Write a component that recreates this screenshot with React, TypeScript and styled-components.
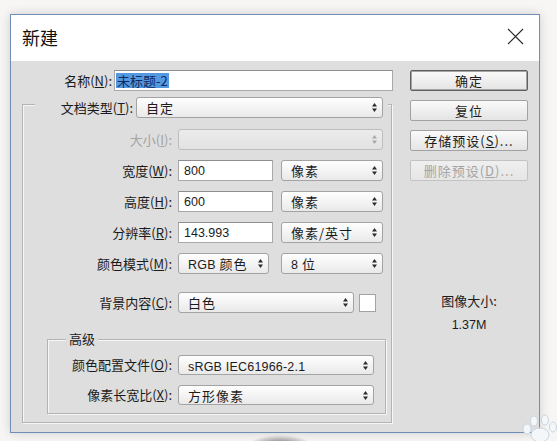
import React from "react";
import styled, { createGlobalStyle } from "styled-components";

const GlobalStyle = createGlobalStyle`
  html, body {
    margin: 0;
    padding: 0;
  }
  body {
    width: 557px;
    height: 441px;
    overflow: hidden;
    background:
      radial-gradient(ellipse 34px 12px at 280px 447px, rgba(35, 35, 35, 0.8), rgba(35, 35, 35, 0) 100%),
      #f8f6f5;
    font-family: "Noto Sans CJK SC", "Noto Sans", sans-serif;
    color: #1b1b1b;
  }
`;

const Page = styled.div`
  position: relative;
  box-sizing: border-box;
  height: 441px;
  padding: 14px 0 0 10px;
`;

const Window = styled.div`
  box-sizing: border-box;
  width: 530px;
  height: 419px;
  border: 1px solid #6d8fb5;
  display: flex;
  flex-direction: column;
  background: #dedede;
  box-shadow: 0 0 10px rgba(0, 0, 0, 0.16);
`;

const TitleBar = styled.div`
  flex-shrink: 0;
  height: 46px;
  background: #fff;
  display: flex;
  align-items: center;
  justify-content: space-between;
  padding: 0 15px 3px 11px;
  box-sizing: border-box;
`;

const Title = styled.span`
  font-size: 18px;
  line-height: 1;
  color: #111;
`;

const Body = styled.div`
  flex: 1;
  display: flex;
  gap: 18px;
  padding: 9px 11px 0 11px;
`;

const LeftCol = styled.div`
  width: 370px;
  display: flex;
  flex-direction: column;
`;

const RightCol = styled.div`
  width: 118px;
  display: flex;
  flex-direction: column;
  gap: 9px;
`;

const Row = styled.div<{ $gap?: number; $mt?: number; $h?: number }>`
  display: flex;
  align-items: center;
  height: ${(p) => p.$h ?? 21}px;
  gap: ${(p) => p.$gap ?? 6}px;
  margin-top: ${(p) => p.$mt ?? 0}px;
`;

const Label = styled.span<{ $w: number; $disabled?: boolean }>`
  width: ${(p) => p.$w}px;
  flex-shrink: 0;
  text-align: right;
  font-size: 13px;
  line-height: 16px;
  white-space: nowrap;
  color: ${(p) => (p.$disabled ? "#a3a3a3" : "#1b1b1b")};
`;

const Key = styled.u`
  text-underline-offset: 1px;
`;

const Group = styled.fieldset<{ $ml?: number; $mr?: number; $mt?: number }>`
  margin: ${(p) => p.$mt ?? 0}px ${(p) => p.$mr ?? 0}px 0 ${(p) => p.$ml ?? 0}px;
  padding: 0 0 8px 0;
  min-width: 0;
  border: 1px solid #b3b3b3;
  box-shadow: 1px 1px 0 #f6f6f6, inset 1px 1px 0 #f6f6f6;
  display: flex;
  flex-direction: column;
  gap: 10px;
`;

const Legend = styled.legend<{ $ml: number }>`
  margin-left: ${(p) => p.$ml}px;
  background: #dedede;
`;

const TypeLegend = styled(Legend)`
  padding: 6px 5px 0 0;
`;

const TextLegend = styled(Legend)`
  padding: 0 3px;
  font-size: 13px;
  line-height: 16px;
`;

const GroupBody = styled.div<{ $pt: number }>`
  padding-top: ${(p) => p.$pt}px;
  display: flex;
  flex-direction: column;
  gap: 10px;
`;

const SelectBox = styled.div<{ $w: number; $ml?: number; $disabled?: boolean; $h?: number }>`
  box-sizing: border-box;
  width: ${(p) => p.$w}px;
  height: ${(p) => p.$h ?? 21}px;
  margin-left: ${(p) => p.$ml ?? 0}px;
  flex-shrink: 0;
  display: flex;
  align-items: center;
  justify-content: space-between;
  padding: 0 5px 0 9px;
  border: 1px solid ${(p) => (p.$disabled ? "#bdbdbd" : "#a3a3a3")};
  border-radius: 3px;
  background: ${(p) =>
    p.$disabled
      ? "linear-gradient(#ececec, #e2e2e2)"
      : "linear-gradient(#fefefe, #f4f4f4 50%, #e9e9e9)"};
  font-size: 13px;
  letter-spacing: 1px;
  color: #1b1b1b;
  white-space: nowrap;
`;

const Latin = styled.span`
  font-family: "Liberation Sans", Arial, sans-serif;
  font-size: 12.5px;
  letter-spacing: 0.2px;
`;

const Field = styled.div<{ $w: number }>`
  box-sizing: border-box;
  width: ${(p) => p.$w}px;
  height: 21px;
  flex-shrink: 0;
  display: flex;
  align-items: center;
  padding-left: 5px;
  background: #fff;
  border: 1px solid #a9a9a9;
  border-top-color: #8e8e8e;
  font-family: "Liberation Sans", Arial, sans-serif;
  font-size: 12.5px;
  color: #1b1b1b;
`;

const NameField = styled(Field)`
  padding-left: 1px;
  font-family: "Noto Sans CJK SC", sans-serif;
  font-size: 13px;
`;

const Selection = styled.span`
  background: #5598e2;
  color: #0f2a5e;
  line-height: 15px;
  padding: 0 1px;
`;

const Swatch = styled.div`
  box-sizing: border-box;
  width: 17px;
  height: 18px;
  margin-left: -1px;
  background: #fff;
  border: 1px solid #a3a3a3;
`;

const Button = styled.div<{ $default?: boolean; $disabled?: boolean }>`
  box-sizing: border-box;
  height: 21px;
  display: flex;
  align-items: center;
  justify-content: center;
  border: 1px solid ${(p) => (p.$default ? "#5f5f5f" : p.$disabled ? "#c3c3c3" : "#a2a2a2")};
  box-shadow: ${(p) => (p.$default ? "inset 0 0 0 1px #a5a5a5" : "none")};
  border-radius: 2px;
  background: ${(p) =>
    p.$disabled ? "linear-gradient(#efefef, #e6e6e6)" : "linear-gradient(#fafafa, #eeeeee 55%, #e4e4e4)"};
  font-size: 13px;
  letter-spacing: 1px;
  color: ${(p) => (p.$disabled ? "#a4a4a4" : "#1b1b1b")};
`;

const SizeInfo = styled.div`
  margin-top: 103px;
  display: flex;
  flex-direction: column;
  align-items: center;
  gap: 8px;
  font-size: 13px;
  line-height: 16px;
`;

const SizeValue = styled.span`
  font-family: "Liberation Sans", Arial, sans-serif;
  font-size: 12.5px;
`;

const Watermark = styled.svg`
  position: absolute;
  right: 0;
  bottom: 0;
`;

const Arrows = ({ disabled }: { disabled?: boolean }) => (
  <svg width="5" height="9" viewBox="0 0 5 9">
    <g fill={disabled ? "#a9a9a9" : "#2b2b2b"}>
      <polygon points="2.5,0 5,3.5 0,3.5" />
      <polygon points="0,5.5 5,5.5 2.5,9" />
    </g>
  </svg>
);

type SelectProps = {
  w: number;
  ml?: number;
  h?: number;
  disabled?: boolean;
  children?: React.ReactNode;
};

const Select = ({ w, ml, h, disabled, children }: SelectProps) => (
  <SelectBox $w={w} $ml={ml} $h={h} $disabled={disabled}>
    <span>{children}</span>
    <Arrows disabled={disabled} />
  </SelectBox>
);

const CloseIcon = () => (
  <svg width="17" height="17" viewBox="0 0 17 17">
    <path d="M1 1 L16 16 M16 1 L1 16" stroke="#2a2a2a" strokeWidth="1.1" fill="none" />
  </svg>
);

const App = () => {
  const W = 149;
  return (
    <Page>
      <GlobalStyle />
      <Window>
        <TitleBar>
          <Title>新建</Title>
          <CloseIcon />
        </TitleBar>
        <Body>
          <LeftCol>
            <Row $gap={2}>
              <Label $w={90}>
                名称(<Key>N</Key>):
              </Label>
              <NameField $w={279}>
                <Selection>未标题-2</Selection>
              </NameField>
            </Row>

            <Group>
              <TypeLegend $ml={12}>
                <Row $gap={3}>
                  <Label $w={98}>
                    文档类型(<Key>T</Key>):
                  </Label>
                  <Select w={247}>自定</Select>
                </Row>
              </TypeLegend>

              <GroupBody $pt={11}>
                <Row>
                  <Label $w={W} $disabled>
                    大小(<Key>I</Key>):
                  </Label>
                  <Select w={205} disabled />
                </Row>
                <Row>
                  <Label $w={W}>
                    宽度(<Key>W</Key>):
                  </Label>
                  <Field $w={95}>800</Field>
                  <Select w={102} ml={2}>
                    像素
                  </Select>
                </Row>
                <Row>
                  <Label $w={W}>
                    高度(<Key>H</Key>):
                  </Label>
                  <Field $w={95}>600</Field>
                  <Select w={102} ml={2}>
                    像素
                  </Select>
                </Row>
                <Row>
                  <Label $w={W}>
                    分辨率(<Key>R</Key>):
                  </Label>
                  <Field $w={95}>143.993</Field>
                  <Select w={102} ml={2}>
                    像素/英寸
                  </Select>
                </Row>
                <Row>
                  <Label $w={W}>
                    颜色模式(<Key>M</Key>):
                  </Label>
                  <Select w={91}>
                    <Latin>RGB</Latin> 颜色
                  </Select>
                  <Select w={102} ml={6}>
                    <Latin>8</Latin> 位
                  </Select>
                </Row>
                <Row $mt={8}>
                  <Label $w={W}>
                    背景内容(<Key>C</Key>):
                  </Label>
                  <Select w={176}>白色</Select>
                  <Swatch />
                </Row>

                <Group $ml={24} $mr={5} $mt={8}>
                  <TextLegend $ml={18}>高级</TextLegend>
                  <GroupBody $pt={8}>
                    <Row $h={20}>
                      <Label $w={124}>
                        颜色配置文件(<Key>O</Key>):
                      </Label>
                      <Select w={196} h={20}>
                        <Latin>sRGB IEC61966-2.1</Latin>
                      </Select>
                    </Row>
                    <Row $h={20}>
                      <Label $w={124}>
                        像素长宽比(<Key>X</Key>):
                      </Label>
                      <Select w={196} h={20}>
                        方形像素
                      </Select>
                    </Row>
                  </GroupBody>
                </Group>
              </GroupBody>
            </Group>
          </LeftCol>

          <RightCol>
            <Button $default>确定</Button>
            <Button>复位</Button>
            <Button>
              存储预设(<Key>S</Key>)...
            </Button>
            <Button $disabled>
              删除预设(<Key>D</Key>)...
            </Button>
            <SizeInfo>
              <span>图像大小:</span>
              <SizeValue>1.37M</SizeValue>
            </SizeInfo>
          </RightCol>
        </Body>
      </Window>

      <Watermark width="40" height="28" viewBox="0 0 40 28">
        <g fill="#f4f7fa" stroke="#c9d5e2" strokeWidth="1">
          <ellipse cx="23" cy="22" rx="9" ry="7" />
          <ellipse cx="10" cy="16" rx="4" ry="5" />
          <ellipse cx="17" cy="8" rx="3.5" ry="5" />
          <ellipse cx="28" cy="7" rx="3.5" ry="5" />
          <ellipse cx="36" cy="14" rx="3.5" ry="5" />
        </g>
      </Watermark>
    </Page>
  );
};

export default App;
